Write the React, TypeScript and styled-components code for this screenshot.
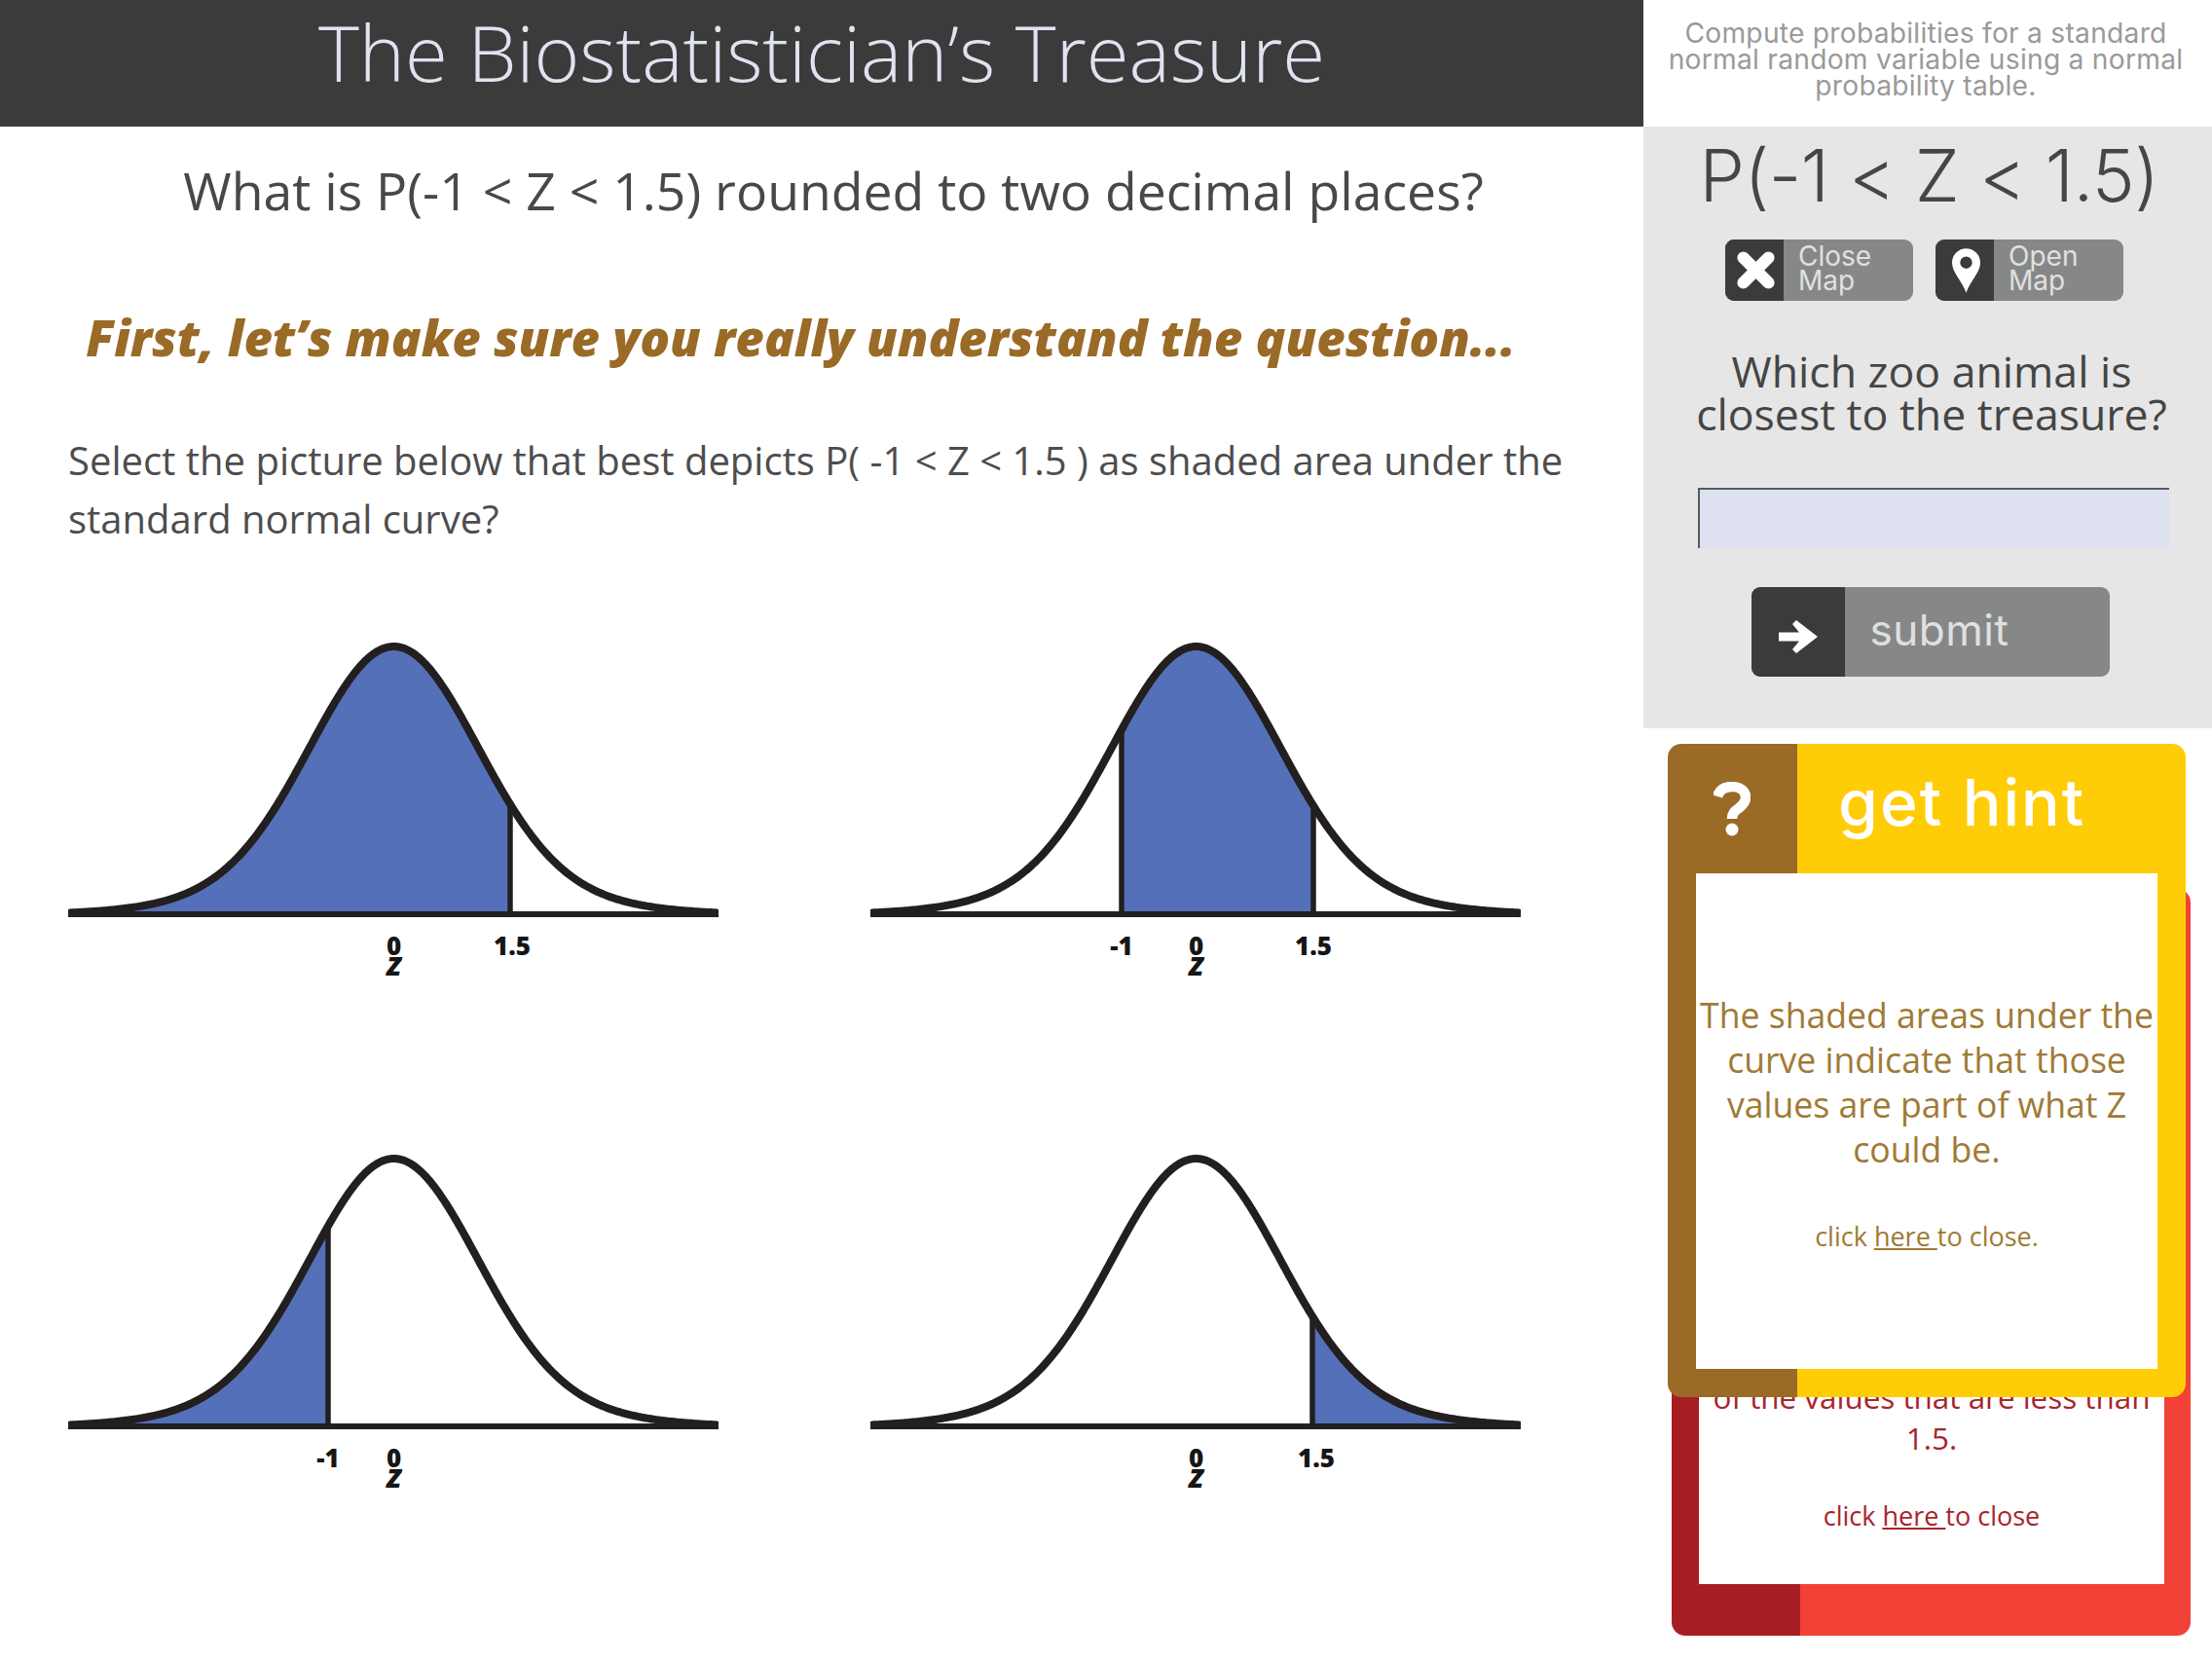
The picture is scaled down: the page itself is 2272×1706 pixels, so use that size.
import React from "react";
import styled, { createGlobalStyle } from "styled-components";

const Global = createGlobalStyle`
  html, body { margin: 0; padding: 0; background: #fff; }
  body { font-family: "Open Sans", "Liberation Sans", sans-serif; overflow: hidden; }
`;

const Page = styled.div`
  display: grid;
  grid-template-columns: 1688px 584px;
  width: 2272px;
  height: 1706px;
  overflow: hidden;
`;

const Main = styled.main`
  display: flex;
  flex-direction: column;
`;

const Banner = styled.header`
  height: 130px;
  background: #3b3b3b;
  display: flex;
  justify-content: center;
`;

const Title = styled.h1`
  margin: 10px 0 0;
  font: 300 79.8px/86px "Open Sans", sans-serif;
  color: #dfe3f0;
`;

const Question = styled.h2`
  margin: 30px 0 0 24px;
  height: 72px;
  font: 400 53.5px/72px "Open Sans", sans-serif;
  color: #484848;
  text-align: center;
`;

const Lead = styled.h3`
  margin: 78px 43px 0 0;
  height: 72px;
  font: italic 800 51px/72px "Open Sans", sans-serif;
  color: #9a6a27;
  text-align: center;
`;

const Instruction = styled.p`
  margin: 61px 0 0;
  padding: 0 70px;
  font: 400 40px/60px "Open Sans", sans-serif;
  color: #4d4d4d;
`;

const ChartGrid = styled.div`
  display: grid;
  grid-template-columns: 668px 668px;
  grid-auto-rows: 526px;
  column-gap: 156px;
  padding: 78px 0 0 70px;
`;

const ChartSvg = styled.svg`
  display: block;
  width: 668px;
  height: 380px;
`;

const Tick = styled.text`
  font: 800 26px "Open Sans", sans-serif;
  fill: #161616;
  text-anchor: middle;
`;

const AxisName = styled(Tick)`
  font-style: italic;
  font-size: 27px;
`;

const Side = styled.aside`
  position: relative;
  display: flex;
  flex-direction: column;
`;

const Objective = styled.p`
  margin: 0 0 0 -4px;
  height: 130px;
  box-sizing: border-box;
  padding: 21px 0 0;
  font: 400 28.2px/27px Inter, "Noto Sans", sans-serif;
  letter-spacing: 0.25px;
  color: #999a9a;
  text-align: center;
  white-space: pre-line;
`;

const Panel = styled.section`
  height: 618px;
  box-sizing: border-box;
  background: #e6e6e6;
  display: flex;
  flex-direction: column;
  align-items: center;
`;

const Expression = styled.div`
  height: 100px;
  margin-left: 3px;
  font: 300 74px/100px Inter, "Noto Sans", sans-serif;
  letter-spacing: -0.5px;
  color: #464646;
  white-space: nowrap;
`;

const MapRow = styled.div`
  display: flex;
  gap: 23px;
  margin: 16px 0 0 -7px;
`;

const SplitButton = styled.button<{ $w: number; $h: number; $icon: number }>`
  display: grid;
  grid-template-columns: ${(p) => p.$icon}px 1fr;
  width: ${(p) => p.$w}px;
  height: ${(p) => p.$h}px;
  padding: 0;
  border: 0;
  border-radius: 9px;
  overflow: hidden;
  background: #868888;
  color: #e0e0e0;
  text-align: left;
`;

const IconCell = styled.span<{ $drop?: number; $shift?: number }>`
  display: flex;
  align-items: center;
  justify-content: center;
  background: #3a3c3c;
  padding-top: ${(p) => p.$drop ?? 0}px;
  padding-left: ${(p) => p.$shift ?? 0}px;
`;

const MapLabel = styled.span`
  padding: 5px 0 0 15px;
  font: 400 28px/25px Inter, "Noto Sans", sans-serif;
  white-space: pre-line;
`;

const Prompt = styled.div`
  margin: 50px 0 0 8px;
  font: 400 44.6px/44px "Open Sans", sans-serif;
  color: #454545;
  text-align: center;
  white-space: pre-line;
`;

const AnswerBox = styled.input`
  box-sizing: border-box;
  width: 484px;
  height: 62px;
  margin: 54px 0 0 11px;
  padding: 0;
  background: #dde1f0;
  border: 0;
  border-top: 2px solid #565a60;
  border-left: 2px solid #565a60;
  display: block;
`;

const SubmitLabel = styled.span`
  padding: 16px 0 0 26px;
  font: 400 44px/56px Inter, "Noto Sans", sans-serif;
  letter-spacing: 0.5px;
`;

const SubmitWrap = styled.div`
  margin: 40px 0 0 5px;
`;

const RedCard = styled.section`
  box-sizing: border-box;
  margin: 165px 0 0 29px;
  width: 533px;
  height: 767px;
  padding: 0 27px 53px 28px;
  border-radius: 14px;
  background: linear-gradient(to right, #a61e22 132px, #f24137 132px);
  display: flex;
`;

const RedBody = styled.div`
  flex: 1;
  background: #fff;
  padding-top: 501px;
  font: 400 31.4px/42px "Open Sans", sans-serif;
  color: #a8242c;
  text-align: center;
`;

const CloseLine = styled.p<{ $gap: number }>`
  margin: ${(p) => p.$gap}px 0 0;
  font: 400 27px/36px "Open Sans", sans-serif;
`;

const CloseLink = styled.a`
  color: inherit;
  text-decoration: underline;
`;

const HintCard = styled.section`
  position: absolute;
  left: 25px;
  top: 764px;
  width: 532px;
  height: 671px;
  box-sizing: border-box;
  padding: 0 29px 29px;
  border-radius: 14px;
  background: linear-gradient(to right, #9a6a27 133px, #ffcd07 133px);
  display: flex;
  flex-direction: column;
`;

const HintHeader = styled.div`
  height: 133px;
  display: flex;
  margin-left: -29px;
  align-items: center;
`;

const HintIcon = styled.span`
  width: 131px;
  display: flex;
  justify-content: center;
`;

const HintLabel = styled.span`
  margin: -14px 0 0 44px;
  font: 500 66px/80px Inter, "Noto Sans", sans-serif;
  letter-spacing: 2px;
  color: #fff;
`;

const HintBody = styled.div`
  flex: 1;
  background: #fff;
  padding-top: 122px;
  font: 400 35.6px/46px "Open Sans", sans-serif;
  color: #a07a35;
  text-align: center;
  white-space: nowrap;
`;

const mean = 334.5;
const base = 299;
const peak = 276;
const right = 668;
const bell = (d: number, s: number) => Math.exp(-(d * d) / (2 * s * s));
const curveY = (x: number) => base - peak * (0.85 * bell(x - mean, 84) + 0.15 * bell(x - mean, 140));
const trace = (a: number, b: number) => {
  const pts: string[] = [];
  for (let x = a; x <= b; x += 2) pts.push(`${x} ${curveY(x).toFixed(2)}`);
  pts.push(`${b} ${curveY(b).toFixed(2)}`);
  return pts.join(" L");
};

type ChartProps = { from: number; to: number; lines: number[]; ticks: { x: number; t: string }[] };

function Chart({ from, to, lines, ticks }: ChartProps) {
  return (
    <ChartSvg viewBox="0 0 668 380">
      <path d={`M${from} ${base} L${trace(from, to)} L${to} ${base} Z`} fill="#5470b8" />
      <path d={`M0 ${base - 0.5} L${trace(2, right - 2)} L${right} ${base - 0.5}`} fill="none" stroke="#231f20" strokeWidth={8} strokeLinejoin="round" />
      <line x1={0} x2={668} y1={base - 1} y2={base - 1} stroke="#231f20" strokeWidth={6} />
      {lines.map((x) => (
        <line key={x} x1={x} x2={x} y1={curveY(x)} y2={base} stroke="#231f20" strokeWidth={5.5} />
      ))}
      <Tick x={mean} y={340}>0</Tick>
      <AxisName x={mean} y={361}>Z</AxisName>
      {ticks.map((k) => (
        <Tick key={k.t} x={k.x} y={340}>{k.t}</Tick>
      ))}
    </ChartSvg>
  );
}

const XIcon = ({ size }: { size: number }) => (
  <svg width={size} height={size} viewBox="0 0 40 40">
    <path d="M9 9 L31 31 M31 9 L9 31" stroke="#fff" strokeWidth={10.5} strokeLinecap="round" />
  </svg>
);

const PinIcon = () => (
  <svg width="29" height="46" viewBox="0 0 28 44">
    <path fillRule="evenodd" fill="#fff" d="M14 0a14 14 0 0 1 14 14c0 10-10 18-14 30C10 32 0 24 0 14A14 14 0 0 1 14 0zM14 8a6 6 0 1 0 0 12a6 6 0 1 0 0-12z" />
  </svg>
);

const ArrowIcon = () => (
  <svg width="40" height="34" viewBox="0 0 40 34">
    <path fill="#fff" d="M0 12.5H21L14 4 18 0 40 17 18 34 14 30 21 21.5H0z" />
  </svg>
);

const QuestionIcon = () => (
  <svg width="38" height="56" viewBox="0 0 38 56">
    <path fill="none" stroke="#fff" strokeWidth={10.5} d="M4 15C6 8 11 5 19 5c9 0 14 5 14 11 0 5-3 8-7 11-4 3-7 5-7 11" />
    <circle cx="19" cy="49" r="6.5" fill="#fff" />
  </svg>
);

export default function App() {
  return (
    <Page>
      <Global />
      <Main>
        <Banner>
          <Title>The Biostatistician’s Treasure</Title>
        </Banner>
        <Question>What is P(-1 &lt; Z &lt; 1.5) rounded to two decimal places?</Question>
        <Lead>First, let’s make sure you really understand the question...</Lead>
        <Instruction>
          Select the picture below that best depicts P( -1 &lt; Z &lt; 1.5 ) as shaded area under the standard normal curve?
        </Instruction>
        <ChartGrid>
          <Chart from={60} to={454} lines={[454]} ticks={[{ x: 456, t: "1.5" }]} />
          <Chart from={258} to={455} lines={[258, 455]} ticks={[{ x: 258, t: "-1" }, { x: 455, t: "1.5" }]} />
          <Chart from={60} to={267} lines={[267]} ticks={[{ x: 267, t: "-1" }]} />
          <Chart from={454} to={610} lines={[454]} ticks={[{ x: 458, t: "1.5" }]} />
        </ChartGrid>
      </Main>
      <Side>
        <Objective>{"Compute probabilities for a standard\nnormal random variable using a normal\nprobability table."}</Objective>
        <Panel>
          <Expression>P(-1 &lt; Z &lt; 1.5)</Expression>
          <MapRow>
            <SplitButton $w={193} $h={63} $icon={60}>
              <IconCell $shift={3}><XIcon size={47} /></IconCell>
              <MapLabel>{"Close\nMap"}</MapLabel>
            </SplitButton>
            <SplitButton $w={193} $h={63} $icon={60}>
              <IconCell $shift={3}><PinIcon /></IconCell>
              <MapLabel>{"Open\nMap"}</MapLabel>
            </SplitButton>
          </MapRow>
          <Prompt>{"Which zoo animal is\nclosest to the treasure?"}</Prompt>
          <AnswerBox aria-label="answer" />
          <SubmitWrap>
            <SplitButton $w={368} $h={92} $icon={96}>
              <IconCell $drop={10}><ArrowIcon /></IconCell>
              <SubmitLabel>submit</SubmitLabel>
            </SplitButton>
          </SubmitWrap>
        </Panel>
        <RedCard>
          <RedBody>
            of the values that are less than
            <br />
            1.5.
            <CloseLine $gap={41}>
              click <CloseLink>here </CloseLink>to close
            </CloseLine>
          </RedBody>
        </RedCard>
        <HintCard>
          <HintHeader>
            <HintIcon><QuestionIcon /></HintIcon>
            <HintLabel>get hint</HintLabel>
          </HintHeader>
          <HintBody>
            The shaded areas under the
            <br />
            curve indicate that those
            <br />
            values are part of what Z
            <br />
            could be.
            <CloseLine $gap={49}>
              click <CloseLink>here </CloseLink>to close.
            </CloseLine>
          </HintBody>
        </HintCard>
      </Side>
    </Page>
  );
}
